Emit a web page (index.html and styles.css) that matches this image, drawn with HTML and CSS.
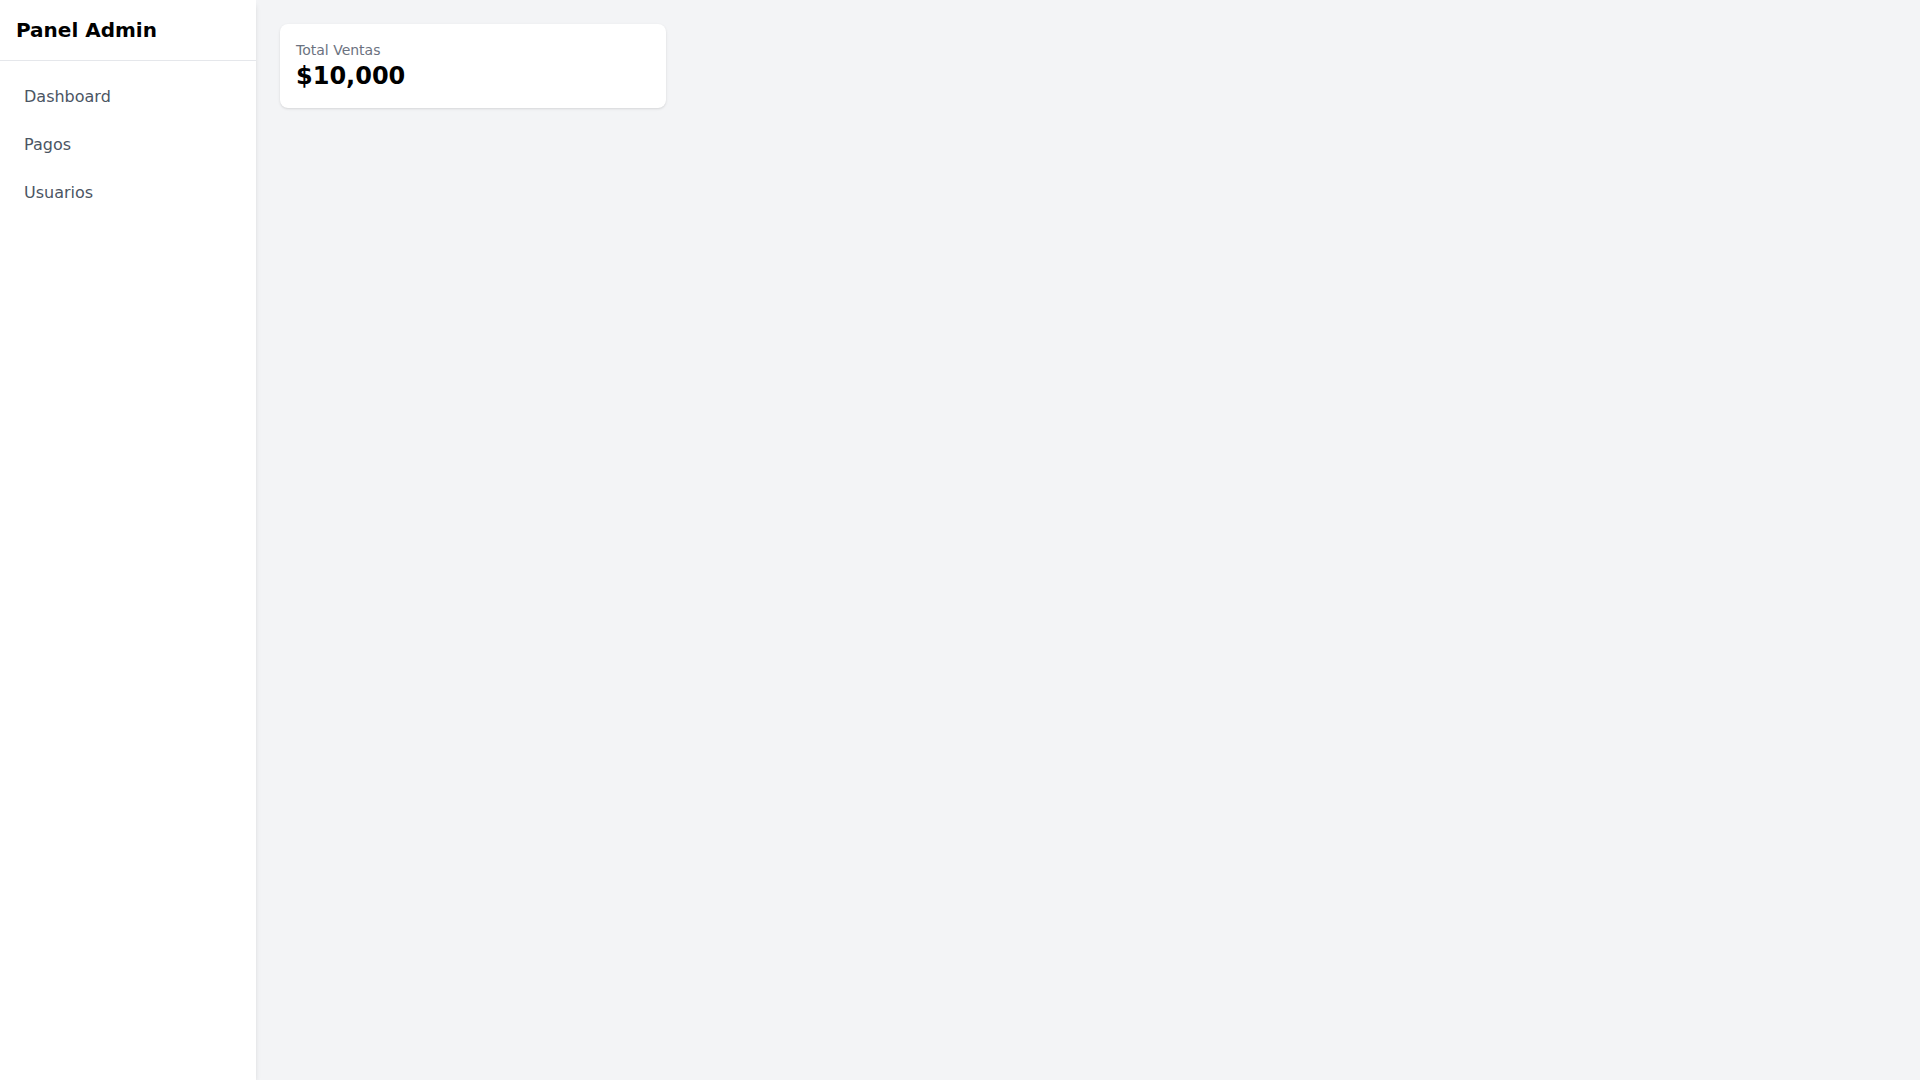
FILE: index.html
```html
<!DOCTYPE html>
<html lang="es">
<head>
  <meta charset="UTF-8">
  <meta name="viewport" content="width=device-width, initial-scale=1">
  <title>Panel Admin</title>
  <link rel="stylesheet" href="styles.css">
</head>
<body>

  <div class="layout">
    <aside class="sidebar">
      <div class="sidebar-header">Panel Admin</div>
      <nav class="sidebar-nav">
        <a href="#">Dashboard</a>
        <a href="#">Pagos</a>
        <a href="#">Usuarios</a>
      </nav>
    </aside>

    <main class="content">
      <div class="stats">
        <div class="stat-card">
          <p class="stat-label">Total Ventas</p>
          <p class="stat-value">$10,000</p>
        </div>
      </div>
    </main>
  </div>

</body>
</html>
```

FILE: styles.css
```css
/* Global */
body {
  margin: 0;
  font-family: 'DejaVu Sans', sans-serif;
  background: #f3f4f6;
  color: #111;
}
.layout {
  display: flex;
  min-height: 100vh;
}
/* Sidebar */
.sidebar {
  width: 256px;
  flex-shrink: 0;
  background: #fff;
  box-shadow: 0 4px 6px -1px rgba(0, 0, 0, 0.1), 0 2px 4px -2px rgba(0, 0, 0, 0.1);
}
.sidebar-header {
  padding: 16px;
  font-size: 20px;
  line-height: 28px;
  font-weight: bold;
  color: #000;
  border-bottom: 1px solid #e5e7eb;
}
.sidebar-nav {
  display: flex;
  flex-direction: column;
  gap: 8px;
  padding: 16px;
}
.sidebar-nav a {
  display: block;
  padding: 8px;
  font-size: 16px;
  line-height: 24px;
  color: #4b5563;
  text-decoration: none;
  border-radius: 4px;
}
.sidebar-nav a:hover {
  background: #f3f4f6;
}
/* Contenu */
.content {
  flex: 1;
  padding: 24px;
}
.stats {
  display: grid;
  grid-template-columns: repeat(4, 1fr);
  gap: 24px;
}
.stat-card {
  background: #fff;
  padding: 16px;
  border-radius: 8px;
  box-shadow: 0 1px 3px 0 rgba(0, 0, 0, 0.1), 0 1px 2px -1px rgba(0, 0, 0, 0.1);
}
.stat-label {
  margin: 0;
  font-size: 14px;
  line-height: 20px;
  color: #6b7280;
}
.stat-value {
  margin: 0;
  font-size: 24px;
  line-height: 32px;
  font-weight: bold;
  color: #000;
}
```
